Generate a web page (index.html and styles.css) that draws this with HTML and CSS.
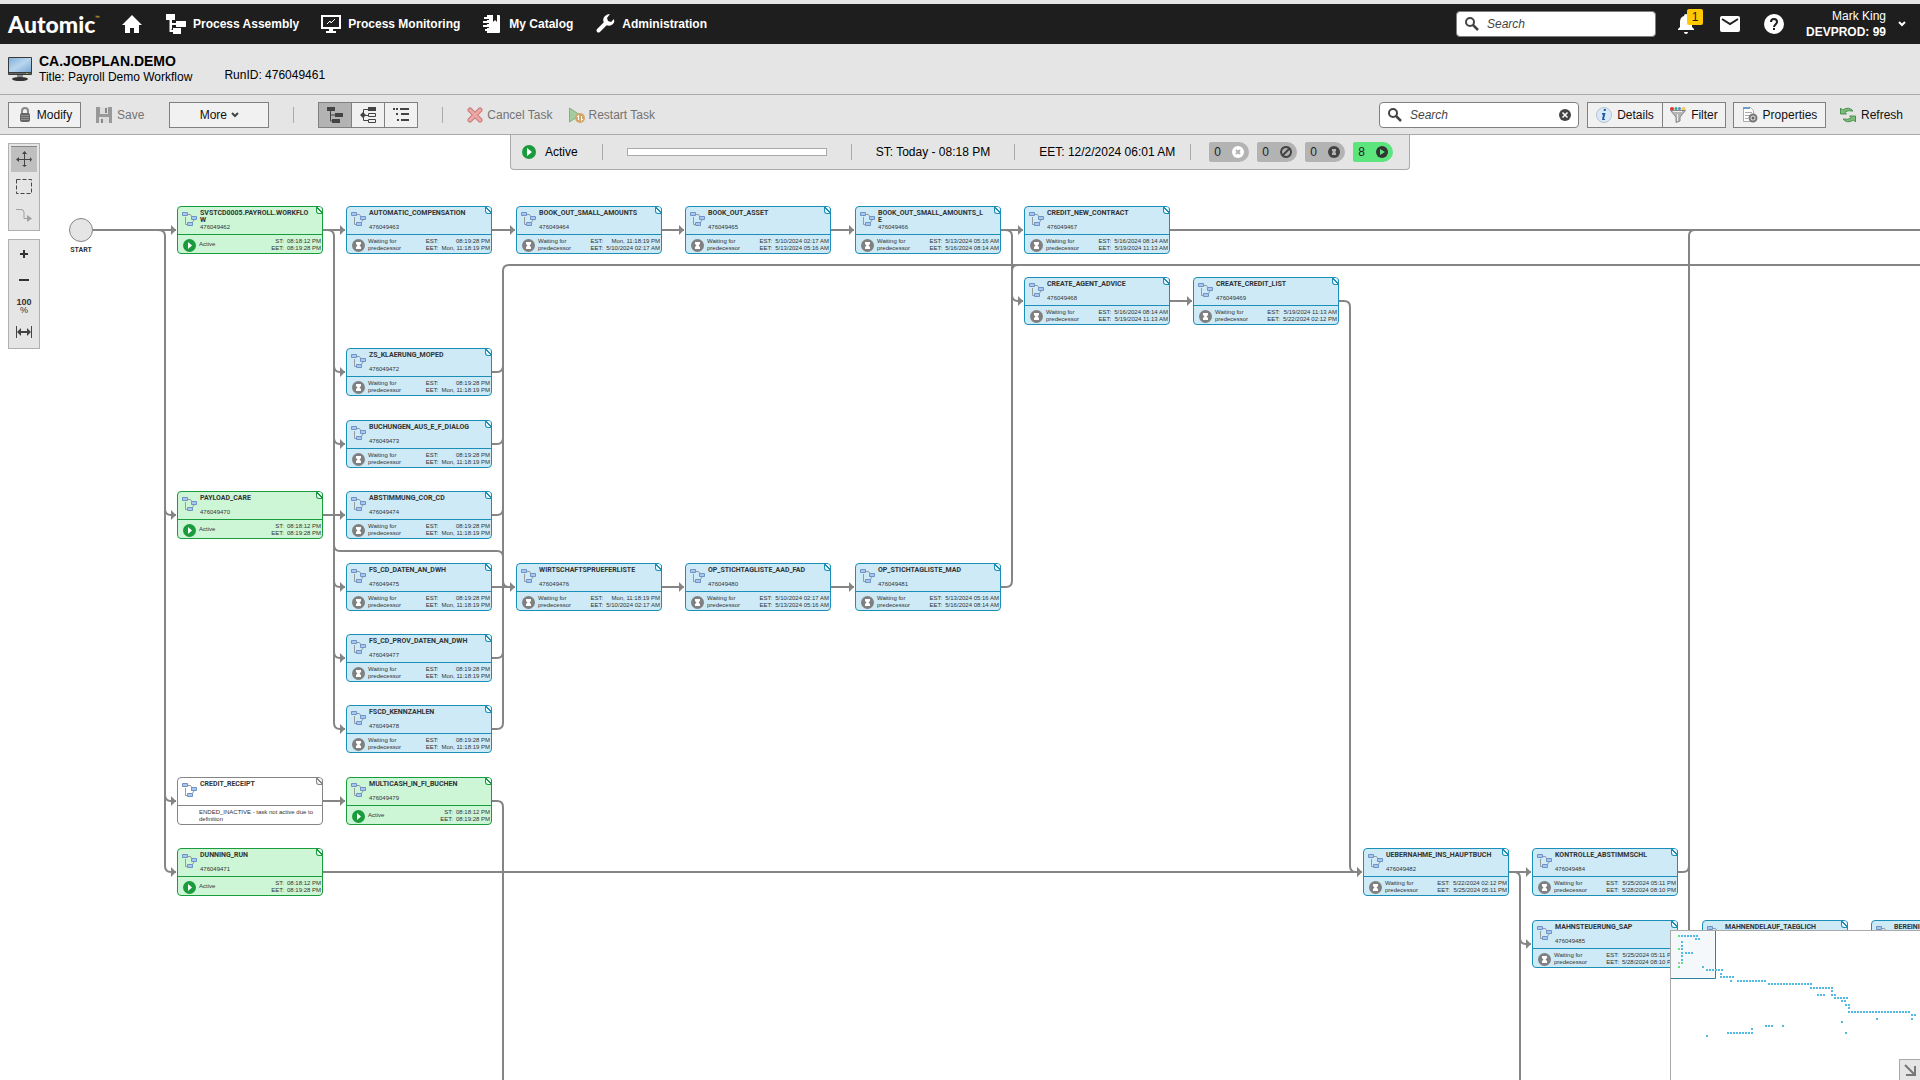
FILE: index.html
```html
<!DOCTYPE html>
<html lang="en">
<head>
  <meta charset="UTF-8" />
  <meta name="viewport" content="width=device-width, initial-scale=1.0"/>
  <title>CA.JOBPLAN.DEMO - Automic</title>
  <link rel="stylesheet" href="styles.css">
</head>
<body>

  <header class="topbar">
    <a class="logo" href="#">Automic<span class="tm">™</span></a>
    <nav class="main-nav">
      <a class="home" href="#" aria-label="Home">
        <svg width="20" height="20" viewBox="0 0 20 20"><path fill="#fff" d="M10 1 0 11h3v8h5v-5h4v5h5v-8h3z"/></svg>
      </a>
      <a href="#">
        <svg width="20" height="20" viewBox="0 0 20 20"><path fill="#fff" d="M0 0h9v6H6v3h4V7h10v6H10v-2H6v4h-.5v1H7v-2h8v6H7v-2H3.500V6H0z"/></svg>
        Process Assembly
      </a>
      <a href="#">
        <svg width="20" height="20" viewBox="0 0 20 20"><path fill="none" stroke="#fff" stroke-width="2" d="M1 2h18v12H1z"/><path fill="#fff" d="M8 15h4v2h3v2H5v-2h3z"/><path fill="none" stroke="#fff" d="m6 10 3-3 1 2 4-4"/></svg>
        Process Monitoring
      </a>
      <a href="#">
        <svg width="20" height="20" viewBox="0 0 20 20"><path fill="#fff" d="M5 1h6v7l2-2 2 2V1h2q1 0 1 1v16q0 1-1 1H5v-2H3v-2h2v-2H1v-2h4V9H1V7h4V5H2V3h3z"/><path stroke="#1e1e1e" d="M3 5.500h4M3 9.500h4M3 13.500h4"/></svg>
        My Catalog
      </a>
      <a href="#">
        <svg width="20" height="20" viewBox="0 0 20 20"><path fill="none" stroke="#fff" stroke-width="4" stroke-linecap="round" d="M3.500 16.500 11 9"/><path fill="#fff" d="M15 0 12 4l1 3 3 1 3-3q1 3-1 5-3 3-7 1L9 9Q7 5 10 2q2-2 5-2z"/></svg>
        Administration
      </a>
    </nav>
    <label class="search">
      <svg width="14" height="14" viewBox="0 0 14 14"><circle cx="5" cy="5" r="4" fill="none" stroke="#444" stroke-width="2"/><path stroke="#444" stroke-width="2.500" d="m8 8 5 5"/></svg>
      <input type="text" placeholder="Search" aria-label="Global search">
    </label>
    <div class="top-icons">
      <button class="plain bell" aria-label="Notifications">
        <svg width="16" height="20" viewBox="0 0 16 20"><path fill="#fff" d="M8 0q2 0 2 2 4 1 4 6v5l2 2v1H0v-1l2-2V8q0-5 4-6 0-2 2-2zM6 18h4q0 2-2 2t-2-2z"/></svg>
        <span class="count">1</span>
      </button>
      <button class="plain" aria-label="Messages">
        <svg width="20" height="16" viewBox="0 0 20 16"><rect width="20" height="16" rx="2" fill="#fff"/><path fill="none" stroke="#1e1e1e" stroke-width="2" d="m2 3 8 5 8-5"/></svg>
      </button>
      <button class="plain" aria-label="Help">
        <svg width="20" height="20" viewBox="0 0 20 20"><circle cx="10" cy="10" r="10" fill="#fff"/><path fill="none" stroke="#1e1e1e" stroke-width="2" d="M7 8q0-3 3-3t3 3q0 1-1.500 2.500T10 13"/><path fill="#1e1e1e" d="M9 14h2v2H9z"/></svg>
      </button>
    </div>
    <button class="plain user">
      <span>Mark King<br><b>DEVPROD: 99</b></span>
      <svg width="8" height="6" viewBox="0 0 8 6"><path fill="none" stroke="#fff" stroke-width="2" d="m1 1 3 3 3-3"/></svg>
    </button>
  </header>

  <section class="titlebar">
    <svg width="24" height="24" viewBox="0 0 24 24">
      <defs><linearGradient id="screen" x2="1" y2="1"><stop stop-color="#7fb0dc"/><stop offset=".5" stop-color="#b9d6ef"/><stop offset="1" stop-color="#7ba8d4"/></linearGradient></defs>
      <rect width="24" height="18" rx="1" fill="#3a3a3a"/><path fill="url(#screen)" d="M1 1h22v14H1z"/><path fill="#666" d="M1 16h22v1H1z"/><path fill="#7c3" d="M18 16h2v1h-2z"/>
      <path fill="#888" d="M9 18h6v3H9z"/><ellipse cx="12" cy="22" rx="8" ry="2" fill="#333"/>
    </svg>
    <div>
      <h1>CA.JOBPLAN.DEMO</h1>
      <p>Title: Payroll Demo Workflow</p>
    </div>
    <p class="runid">RunID: 476049461</p>
  </section>

  <section class="toolbar">
    <button class="btn modify">
      <svg width="12" height="16" viewBox="0 0 12 16"><path fill="none" stroke="#888" stroke-width="2" d="M3 8V4q0-3 3-3t3 3v4"/><rect x="1" y="6" width="10" height="9" rx="2" fill="#666"/><path stroke="#909090" d="M2 8.500h8M2 10.500h8M2 12.500h8"/></svg>
      Modify
    </button>
    <button class="link save" disabled>
      <svg width="16" height="16" viewBox="0 0 16 16"><path fill="#999" d="M0 0h4v7h8V0h4v16H0z"/><path fill="#ddd" d="M4 0h8v7H4zM3 10h10v6H3z"/><path fill="#888" d="M9 1h2v5H9zM5 12h2v4H5z"/></svg>
      Save
    </button>
    <button class="btn more">More
      <svg width="8" height="6" viewBox="0 0 8 6"><path fill="none" stroke="#444" stroke-width="2" d="m1 1 3 3 3-3"/></svg>
    </button>
    <span class="sep"></span>
    <div class="group">
      <button class="btn selected" aria-label="Graph view">
        <svg width="18" height="18" viewBox="0 0 18 18"><path fill="#444" d="M1 1h8v4H1zM9 7h8v4H9zM6 13h8v4H6z"/><path fill="none" stroke="#444" d="M4.500 5v10H7M4.500 9H9"/></svg>
      </button>
      <button class="btn" aria-label="Tree view">
        <svg width="18" height="18" viewBox="0 0 18 18"><path fill="#444" d="M9 1h8v4H9zM1 9l3-3 3 3-3 3z"/><path fill="none" stroke="#444" d="M9 3.500H4.500v11H9M5 9.500h4M9.500 7.500h7v3h-7zM9.500 13.500h7v3h-7z"/></svg>
      </button>
      <button class="btn" aria-label="List view">
        <svg width="18" height="16" viewBox="0 0 18 16"><path stroke="#444" stroke-width="2" d="M1 2h2M4 2h2M8 2h9M4 7h2M9 7h8M5 13h2M9 13h8"/></svg>
      </button>
    </div>
    <span class="sep"></span>
    <button class="link cancel" disabled>
      <svg width="16" height="16" viewBox="0 0 16 16"><path stroke="#c97a7a" stroke-width="5" stroke-linecap="round" d="m3 3 10 10M13 3 3 13"/><path stroke="#eda7a5" stroke-width="3" stroke-linecap="round" d="m3 3 10 10M13 3 3 13"/></svg>
      Cancel Task
    </button>
    <button class="link restart" disabled>
      <svg width="16" height="16" viewBox="0 0 16 16"><path fill="#a2cc9b" stroke="#83ae7e" d="M.5 1v14L11 8z"/><circle cx="11" cy="11" r="5" fill="#d2a66a"/><path fill="none" stroke="#fff" d="m8 10 1.500-1.500V13M14 12l-1.500 1.500V9"/></svg>
      Restart Task
    </button>

    <label class="search tool-search">
      <svg width="14" height="14" viewBox="0 0 14 14"><circle cx="5" cy="5" r="4" fill="none" stroke="#444" stroke-width="2"/><path stroke="#444" stroke-width="2.500" d="m8 8 5 5"/></svg>
      <input type="text" placeholder="Search" aria-label="Search tasks">
      <svg width="12" height="12" viewBox="0 0 12 12"><circle cx="6" cy="6" r="6" fill="#444"/><path stroke="#fff" stroke-width="1.500" d="m3.500 3.500 5 5M8.500 3.500l-5 5"/></svg>
    </label>
    <div class="group">
      <button class="btn details">
        <svg width="16" height="16" viewBox="0 0 16 16"><circle cx="8" cy="8" r="7.500" fill="#d8e8f6" stroke="#b3c4d4"/><path fill="#245a9c" d="M8 2h2l-.5 2h-2zM6 6h3.500L8 12h1v1H6l1-5.500H6z"/></svg>
        Details
      </button>
      <button class="btn filter">
        <svg width="16" height="16" viewBox="0 0 16 16"><circle cx="2" cy="2" r="2" fill="#d33"/><circle cx="6" cy="1.500" r="1.500" fill="#3a7"/><circle cx="9.500" cy="1.500" r="1.500" fill="#58c"/><circle cx="13.500" cy="2" r="2" fill="#ec5"/><path fill="#b5b5b5" stroke="#888" d="M.5 3.500h15L10 10v4l-4 1.500V10z"/><path stroke="#eee" d="M3 4.500h9M7.500 7v7"/></svg>
        Filter
      </button>
    </div>
    <button class="btn properties">
      <svg width="16" height="16" viewBox="0 0 16 16"><path fill="#fff" stroke="#aaa" d="M1.500.5h7l3 3v11h-10z"/><path stroke="#6c9bc8" stroke-width="2" d="M1 1h7"/><path stroke="#aaa" d="M3 5.500h7M3 8.500h5M3 11.500h3"/><circle cx="11" cy="11" r="3.500" fill="#ddd" stroke="#777" stroke-width="2"/><circle cx="11" cy="11" r="1.500" fill="#666"/></svg>
      Properties
    </button>
    <button class="link refresh">
      <svg width="16" height="16" viewBox="0 0 16 16"><path fill="#7cbd7a" stroke="#4d8f50" d="M.5 1v6h6L4.500 5Q8 3 13 4q-4-5-10.500-1zM15.500 15V9h-6l2 2Q8 13 3 12q4 5 10.500 1z"/></svg>
      Refresh
    </button>
  </section>

  <main class="canvas" id="canvas">
    <svg class="links" width="100%" height="100%">
      <defs>
        <marker id="arrow" markerUnits="userSpaceOnUse" markerWidth="6" markerHeight="10" refX="5" refY="5"><path fill="#858585" d="M0 0v10l5-5z"/></marker>
      </defs>
      <circle cx="81" cy="95" r="11.500" fill="#e5e5e5" stroke="#858585"/>
      <g class="plainlines">
        <path d="M492 237h5q6 0 6-6M492 309h5q6 0 6-6M492 380h5q6 0 6-6M492 523h5q6 0 6-6"/>
        <path d="M492 594h5q6 0 6-6V136q0-6 6-6h3000"/>
        <path d="M334 410q0 6 6 6h157q6 0 6 6v24q0 6 6 6"/>
        <path d="M1001 452h5q6 0 6-6V136q0-6 6-6"/>
        <path d="M492 666h5q6 0 6 6v2000"/>
        <path d="M1170 95h3000M1509 737h5q6 0 6 6v2000"/>
        <path d="M1678 737h5q6 0 6-6M1689 2000V101q0-6 6-6"/>
      </g>
      <g class="arrows">
        <path d="M93 95h83"/>
        <path d="M158 95q7 0 7 6v630q0 6 6 6h5"/>
        <path d="M165 374q0 6 6 6h5"/>
        <path d="M165 660q0 6 6 6h5"/>
        <path d="M323 95h22"/>
        <path d="M327 95q7 0 7 6v487q0 6 6 6h5"/>
        <path d="M334 231q0 6 6 6h5"/>
        <path d="M334 303q0 6 6 6h5"/>
        <path d="M323 380h22"/>
        <path d="M334 446q0 6 6 6h5"/>
        <path d="M334 517q0 6 6 6h5"/>
        <path d="M492 95h23"/>
        <path d="M662 95h22"/>
        <path d="M831 95h23"/>
        <path d="M1001 95h22"/>
        <path d="M1005 95q7 0 7 6v59q0 6 6 6h5"/>
        <path d="M1170 166h22"/>
        <path d="M1339 166h5q6 0 6 6v559q0 6 6 6h6"/>
        <path d="M492 452h23"/>
        <path d="M662 452h22"/>
        <path d="M831 452h23"/>
        <path d="M323 666h22"/>
        <path d="M323 737h1039"/>
        <path d="M1509 737h22"/>
        <path d="M1520 803q0 6 6 6h5"/>
      </g>
    </svg>
    <span class="start-label">START</span>

    <div class="status">
      <svg width="14" height="14" viewBox="0 0 14 14"><circle cx="7" cy="7" r="7" fill="#1a9b3c"/><path fill="#fff" d="M5 3v8l5-4z"/></svg>
      <span class="state">Active</span>
      <span class="sep"></span>
      <div class="progress" role="progressbar" aria-label="Progress"></div>
      <span class="sep"></span>
      <span>ST: Today - 08:18 PM</span>
      <span class="sep"></span>
      <span>EET: 12/2/2024 06:01 AM</span>
      <span class="sep last"></span>
      <div class="pills">
        <span class="pill">0<svg width="14" height="14" viewBox="0 0 14 14"><circle cx="7" cy="7" r="6" fill="#fff"/><path stroke="#b3b3b3" stroke-width="2" d="m5 5 4 4M9 5 5 9"/></svg></span>
        <span class="pill">0<svg width="14" height="14" viewBox="0 0 14 14"><path fill="none" stroke="#444" stroke-width="2" d="M3 11 11 3M7 2a5 5 0 1 0 .1 0z"/></svg></span>
        <span class="pill">0<svg width="14" height="14" viewBox="0 0 14 14"><circle cx="7" cy="7" r="6" fill="#444"/><path fill="#b3b3b3" d="M5 4h4v2L8 7l1 1v2H5V8l1-1-1-1z"/></svg></span>
        <span class="pill running">8<svg width="14" height="14" viewBox="0 0 14 14"><circle cx="7" cy="7" r="6" fill="#333"/><path fill="#5de57d" d="M5 4v6l5-3z"/></svg></span>
      </div>
    </div>

    <div class="tools">
      <div class="toolbox">
        <button class="selected" aria-label="Move">
          <svg width="16" height="16" viewBox="0 0 16 16"><path fill="none" stroke="#444" d="M1 8.500h14M8.500 1v14"/><path fill="#444" d="M0 8.500 3 6v5zM16 8.500 14 6v5zM8.500 0 6 3h5zM8.500 16 6 14h5z"/></svg>
        </button>
        <button aria-label="Select area">
          <svg width="18" height="16" viewBox="0 0 18 16"><path fill="none" stroke="#444" stroke-dasharray="4 2" d="M1.500.5h15v14h-15z"/></svg>
        </button>
        <button aria-label="Connect">
          <svg width="16" height="14" viewBox="0 0 16 14"><path fill="none" stroke="#a0a0a0" stroke-width="1" d="M0 1.500h5q3 0 3 3v6h4"/><path fill="#a0a0a0" d="M11 7v7l5-3.500z"/></svg>
        </button>
      </div>
      <div class="toolbox zoom">
        <button aria-label="Zoom in"><svg width="10" height="10" viewBox="0 0 10 10"><path stroke="#333" stroke-width="2" d="M1 5h8M5 1v8"/></svg></button>
        <button aria-label="Zoom out"><svg width="10" height="10" viewBox="0 0 10 10"><path stroke="#333" stroke-width="2" d="M0 5h10"/></svg></button>
        <button class="percent"><span><b>100</b><br>%</span></button>
        <button aria-label="Fit width"><svg width="16" height="12" viewBox="0 0 16 12"><path stroke="#444" d="M.5 0v12M15.500 0v12"/><path stroke="#444" stroke-width="2" d="M4 6h8"/><path fill="#444" d="M1 6l4-4v8zM15 6l-4-4v8z"/></svg></button>
      </div>
    </div>

    <div class="minimap">
      <svg width="249" height="149" viewBox="0 0 249 149">
        <path fill="#f4f8fa" d="M0 0h45v48H0z"/>
        <path fill="none" stroke="#31809f" d="M44.500 0v47.500H0"/>
        <g fill="none" stroke-width="2" stroke-dasharray="2 1">
          <path stroke="#5de57d" d="M7 5h2M7 18h2M7 36h2M10 32h2"/>
          <path stroke="#bbb" d="M7 32h2"/>
          <path stroke="#52bbe4" d="M10 5h17M24 8h5M10 11h2M10 15h2M10 18h2M10 22h2M14 22h8M10 25h2M10 29h2M31 36h2M35 39h17M49 43h2M49 46h14M59 50h2M66 50h29M97 53h44M139 57h23M160 60h2M146 64h8M160 64h5M163 67h14M170 70h5M174 74h5M177 77h2M177 81h62M240 84h5M240 88h2M205 88h2M170 91h2M174 102h2M94 95h8M111 95h2M80 98h2M56 102h26M35 105h2"/>
        </g>
      </svg>
      <button aria-label="Hide overview"><svg width="12" height="12" viewBox="0 0 12 12"><path fill="none" stroke="#777" stroke-width="2" d="m1 1 9 9M11 2v9H2"/></svg></button>
    </div>
  </main>

  <script src="script.js"></script>
</body>
</html>
```

FILE: styles.css
```css
* {
  box-sizing: border-box;
}

body {
  display: flex;
  flex-direction: column;
  height: 100vh;
  margin: 0;
  border-top: 4px solid #e5e5e5;
  overflow: hidden;
  background: #fff;
  color: #111;
  font: 12px/16px "Liberation Sans", Arial, sans-serif;
}

button, input {
  font: inherit;
  color: inherit;
}

svg {
  display: block;
  flex: none;
}

h1, p {
  margin: 0;
}

/* top bar */

.topbar {
  display: flex;
  align-items: center;
  height: 40px;
  padding: 0 14px 0 8px;
  background: #1e1e1e;
  color: #fff;
}

.topbar a {
  color: #fff;
  text-decoration: none;
}

.logo {
  display: flex;
  width: 114px;
  font: 900 23px/36px Lato, sans-serif;
}

.tm {
  color: #c9a030;
  font-size: 6px;
  line-height: 24px;
}

.main-nav {
  display: flex;
  gap: 22px;
  flex: 1;
  font-weight: bold;
}

.main-nav a {
  display: flex;
  align-items: center;
  gap: 7px;
}

.home {
  margin-right: 2px;
}

.search {
  display: flex;
  align-items: center;
  gap: 8px;
  width: 200px;
  height: 26px;
  padding: 0 7px 0 8px;
  border: 1px solid #808080;
  border-radius: 4px;
  background: #fff;
  color: #444;
}

.search input {
  flex: 1;
  min-width: 0;
  padding: 0;
  border: 0;
  outline: 0;
  background: none;
}

.search input::placeholder {
  color: #444;
  font-style: italic;
  opacity: 1;
}

.plain {
  padding: 0;
  border: 0;
  background: none;
}

.top-icons {
  display: flex;
  align-items: center;
  gap: 24px;
  margin-left: 22px;
}

.bell {
  position: relative;
  margin-right: 2px;
}

.count {
  position: absolute;
  left: 9px;
  top: -5px;
  width: 16px;
  height: 16px;
  border-radius: 2px;
  background: #ffc800;
  color: #222;
}

.user {
  display: flex;
  align-items: center;
  gap: 12px;
  margin-left: 22px;
  text-align: right;
}

/* object title */

.titlebar {
  display: flex;
  align-items: center;
  gap: 7px;
  height: 51px;
  padding: 0 8px;
  border-bottom: 1px solid #aaa;
  background: #e5e5e5;
  color: #000;
}

.titlebar h1 {
  font-size: 14px;
  line-height: 17px;
}

.titlebar p {
  line-height: 15px;
}

.runid {
  margin-left: 25px;
  padding-top: 12px;
}

/* toolbar */

.toolbar {
  display: flex;
  align-items: center;
  height: 40px;
  padding: 0 16px 0 8px;
  border-bottom: 1px solid #aaa;
  background: #e5e5e5;
}

.btn, .link {
  display: flex;
  align-items: center;
  justify-content: center;
  gap: 5px;
  height: 26px;
  padding: 0;
  border: 1px solid #808080;
  background: #f1f1f1;
}

.link {
  border-color: transparent;
  background: none;
}

.link:disabled {
  color: #737373;
}

.modify {
  width: 73px;
  gap: 6px;
  padding-left: 2px;
}

.save {
  margin-left: 14px;
}

.more {
  width: 100px;
  margin-left: 24px;
  gap: 4px;
}

.sep {
  width: 1px;
  height: 16px;
  margin: 0 24px;
  background: #aaa;
}

.group {
  display: flex;
}

.group .btn {
  width: 34px;
}

.group .btn + .btn {
  margin-left: -1px;
}

.group .selected {
  background: #b3b3b3;
}

.cancel, .restart {
  gap: 4px;
}

.cancel {
  margin-left: -1px;
}

.restart {
  margin-left: 14px;
}

.tool-search {
  margin-left: auto;
  margin-right: 8px;
}

.group .details {
  width: 76px;
}

.group .filter {
  width: 64px;
}

.properties {
  width: 93px;
  margin-left: 7px;
}

.refresh {
  margin-left: 13px;
}

/* workflow canvas */

.canvas {
  position: relative;
  flex: 1;
  min-height: 0;
  overflow: hidden;
}

.links {
  position: absolute;
  inset: 0;
}

.links path {
  stroke: #858585;
  stroke-width: 2;
  fill: none;
}

.links marker path {
  stroke: none;
  fill: #858585;
}

.arrows path {
  marker-end: url(#arrow);
}

.start-label {
  position: absolute;
  left: 61px;
  top: 111px;
  width: 40px;
  color: #333;
  font: bold 7px/8px Roboto, sans-serif;
  text-align: center;
}

.status {
  position: relative;
  display: flex;
  align-items: center;
  width: 900px;
  height: 35px;
  margin: 0 auto;
  padding: 0 11px;
  border: 1px solid #aaa;
  border-top: 0;
  border-radius: 0 0 4px 4px;
  background: #e5e5e5;
  color: #000;
}

.state {
  margin-left: 9px;
}

.progress {
  width: 200px;
  height: 8px;
  border: 1px solid #aaa;
  background: #fff;
}

.status .last {
  margin: 0 18px 0 15px;
}

.pills {
  display: flex;
  gap: 8px;
}

.pill {
  display: flex;
  align-items: center;
  justify-content: space-between;
  width: 40px;
  height: 20px;
  padding: 0 4px 0 5px;
  border-radius: 2px 10px 10px 2px;
  background: #b3b3b3;
  color: #222;
}

.running {
  background: #5de57d;
}

/* floating tool boxes */

.tools {
  position: absolute;
  left: 8px;
  top: 8px;
  display: flex;
  flex-direction: column;
  gap: 8px;
}

.toolbox {
  display: flex;
  flex-direction: column;
  gap: 2px;
  width: 32px;
  padding: 2px;
  border: 1px solid #b0b0b0;
  background: #e5e5e5;
}

.zoom {
  gap: 0;
  padding: 1px 2px 3px;
}

.toolbox button {
  display: flex;
  align-items: center;
  justify-content: center;
  height: 26px;
  padding: 0;
  border: 0;
  background: none;
}

.toolbox .selected {
  box-shadow: inset 0 1px #888;
  background: #bfbfbf;
}

.toolbox .percent {
  color: #333;
  font-size: 9px;
  line-height: 8px;
}

/* task boxes */

.task {
  position: absolute;
  display: flex;
  flex-direction: column;
  width: 146px;
  height: 48px;
  border: 1px solid #1c8fb8;
  border-radius: 4px;
  background: #cdeaf6;
  color: #333;
  font-size: 6px;
  line-height: 7px;
}

.task.active {
  border-color: #1a9b3c;
  background: #cdf6d6;
}

.task.inactive {
  border-color: #858585;
  background: #fff;
}

.task-head {
  display: flex;
  gap: 3px;
  height: 28px;
  padding: 3px 0 0 4px;
  border-bottom: 1px solid;
  border-color: inherit;
}

.task-icon {
  margin-top: 2px;
}

.task-name {
  height: 14px;
  font: bold 7px/7px Roboto, sans-serif;
}

.corner {
  position: absolute;
  right: -1px;
  top: 0;
  width: 7px;
  height: 7px;
  border: 1px solid;
  border-color: inherit;
  border-top: 0;
  border-radius: 0 3px 0 3px;
  background: linear-gradient(45deg, #eef8fb 42%, currentColor 43%, currentColor 57%, #eef8fb 58%);
  color: #1c8fb8;
}

.active .corner {
  color: #1a9b3c;
}

.inactive .corner {
  color: #858585;
}

.task-foot {
  display: flex;
  flex: 1;
  align-items: center;
  gap: 3px;
  padding: 1px 1px 0 5px;
}

.task-foot svg {
  margin-top: 2px;
}

.inactive .task-foot {
  padding-left: 21px;
}

.task-state {
  flex: 1;
}

.times {
  display: grid;
  grid-template-columns: auto auto;
  column-gap: 3px;
  text-align: right;
  white-space: nowrap;
}

/* overview */

.minimap {
  position: absolute;
  right: 0;
  bottom: 0;
  z-index: 1;
  border: solid #aaa;
  border-width: 1px 0 0 1px;
  background: #fff;
}

.minimap button {
  position: absolute;
  right: 0;
  bottom: 0;
  width: 21px;
  height: 21px;
  padding: 0 0 0 4px;
  border: solid #aaa;
  border-width: 1px 0 0 1px;
  background: #e5e5e5;
}
```

FILE: script.js
```js
const COL_WIDTH = 169.4;
const ROW_HEIGHT = 71.4;
const LEFT = 177;
const TOP = 71;

const evening = ['08:19:28 PM', 'Mon, 11:18:19 PM'];
const active = ['08:18:12 PM', '08:19:28 PM'];
const may10 = ['Mon, 11:18:19 PM', '5/10/2024 02:17 AM'];
const may13 = ['5/10/2024 02:17 AM', '5/13/2024 05:16 AM'];
const may16 = ['5/13/2024 05:16 AM', '5/16/2024 08:14 AM'];
const may19 = ['5/16/2024 08:14 AM', '5/19/2024 11:13 AM'];
const may22 = ['5/19/2024 11:13 AM', '5/22/2024 02:12 PM'];
const may25 = ['5/22/2024 02:12 PM', '5/25/2024 05:11 PM'];
const may28 = ['5/25/2024 05:11 PM', '5/28/2024 08:10 PM'];

// column, row, name, run id, times, state
const tasks = [
  [0, 0, 'SVSTCD0005.PAYROLL.WORKFLO<br>W', '476049462', active, 'active'],
  [1, 0, 'AUTOMATIC_COMPENSATION', '476049463', evening],
  [2, 0, 'BOOK_OUT_SMALL_AMOUNTS', '476049464', may10],
  [3, 0, 'BOOK_OUT_ASSET', '476049465', may13],
  [4, 0, 'BOOK_OUT_SMALL_AMOUNTS_L<br>E', '476049466', may16],
  [5, 0, 'CREDIT_NEW_CONTRACT', '476049467', may19],
  [5, 1, 'CREATE_AGENT_ADVICE', '476049468', may19],
  [6, 1, 'CREATE_CREDIT_LIST', '476049469', may22],
  [1, 2, 'ZS_KLAERUNG_MOPED', '476049472', evening],
  [1, 3, 'BUCHUNGEN_AUS_E_F_DIALOG', '476049473', evening],
  [0, 4, 'PAYLOAD_CARE', '476049470', active, 'active'],
  [1, 4, 'ABSTIMMUNG_COR_CD', '476049474', evening],
  [1, 5, 'FS_CD_DATEN_AN_DWH', '476049475', evening],
  [2, 5, 'WIRTSCHAFTSPRUEFERLISTE', '476049476', may10],
  [3, 5, 'OP_STICHTAGLISTE_AAD_FAD', '476049480', may13],
  [4, 5, 'OP_STICHTAGLISTE_MAD', '476049481', may16],
  [1, 6, 'FS_CD_PROV_DATEN_AN_DWH', '476049477', evening],
  [1, 7, 'FSCD_KENNZAHLEN', '476049478', evening],
  [0, 8, 'CREDIT_RECEIPT', '', null, 'inactive'],
  [1, 8, 'MULTICASH_IN_FI_BUCHEN', '476049479', active, 'active'],
  [0, 9, 'DUNNING_RUN', '476049471', active, 'active'],
  [7, 9, 'UEBERNAHME_INS_HAUPTBUCH', '476049482', may25],
  [8, 9, 'KONTROLLE_ABSTIMMSCHL', '476049484', may28],
  [8, 10, 'MAHNSTEUERUNG_SAP', '476049485', may28],
  [9, 10, 'MAHNENDELAUF_TAEGLICH', '476049486', may28],
  [10, 10, 'BEREINIGUNG_SAP', '476049487', may28]
];

const taskIcon = `<svg class="task-icon" width="15" height="15" viewBox="0 0 15 15">
  <path fill="none" stroke="#999" d="M6 2.500h2.500l2 3M3.500 5v7.500H6M12 8l-2 3"/>
  <path fill="#a9c8ee" stroke="#6f93c6" d="M.5.5h5v3h-5zM9.500 4.500h5v3h-5zM5.500 10.500h5v3h-5z"/></svg>`;
const playIcon = `<svg width="13" height="13" viewBox="0 0 13 13"><circle cx="6.500" cy="6.500" r="6.500" fill="#1a9b3c"/><path fill="#fff" d="M5 3v7l4-3.500z"/></svg>`;
const waitIcon = `<svg width="13" height="13" viewBox="0 0 13 13"><circle cx="6.500" cy="6.500" r="6.500" fill="#808080"/><path fill="#fff" d="M4 3h5v2L7.500 6.500 9 8v2H4V8l1.500-1.500L4 5z"/></svg>`;

function footer(times, state) {
  if (state === 'inactive') {
    return '<span class="task-state">ENDED_INACTIVE - task not active due to definition</span>';
  }
  const running = state === 'active';
  return `${running ? playIcon : waitIcon}
    <span class="task-state">${running ? 'Active' : 'Waiting for<br>predecessor'}</span>
    <div class="times">
      <span>${running ? 'ST:' : 'EST:'}</span><span>${times[0]}</span>
      <span>EET:</span><span>${times[1]}</span>
    </div>`;
}

const canvas = document.getElementById('canvas');

tasks.forEach(([col, row, name, id, times, state]) => {
  const task = document.createElement('div');
  task.className = 'task ' + (state || 'waiting');
  task.style.left = Math.round(LEFT + col * COL_WIDTH) + 'px';
  task.style.top = Math.floor(TOP + row * ROW_HEIGHT) + 'px';
  task.innerHTML = `
    <div class="task-head">${taskIcon}
      <div><div class="task-name">${name}</div><div>${id}</div></div>
    </div>
    <span class="corner"></span>
    <div class="task-foot">${footer(times, state)}</div>`;
  canvas.appendChild(task);
});
```
